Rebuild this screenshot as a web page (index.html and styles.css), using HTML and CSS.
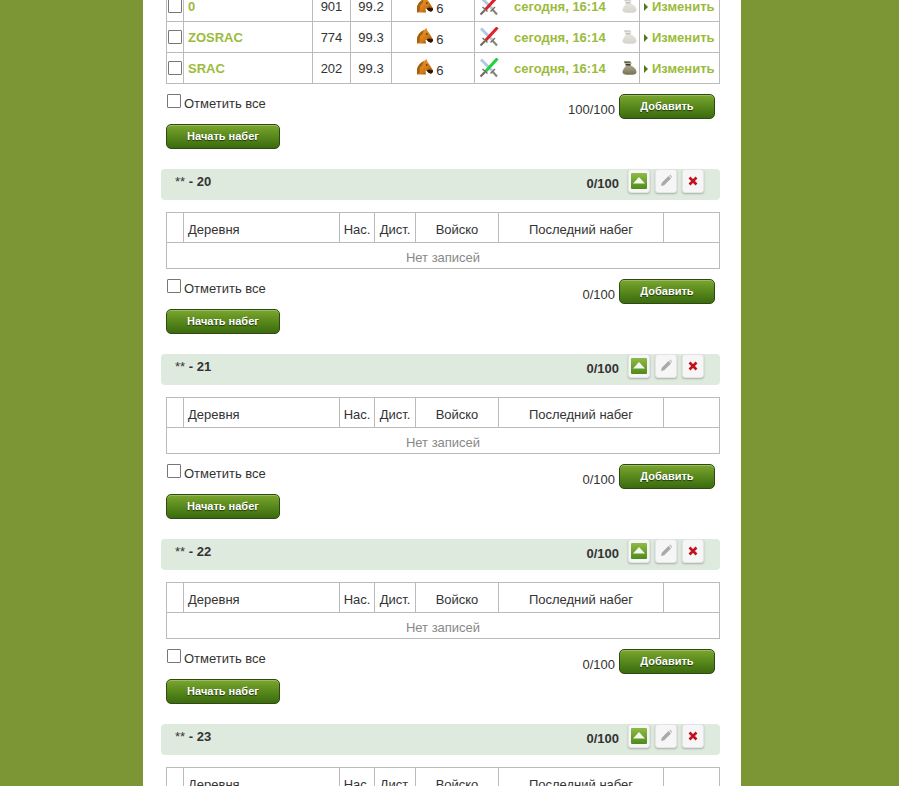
FILE: index.html
```html
<!DOCTYPE html>
<html lang="en">
<head>
    <meta charset="UTF-8">
    <meta name="viewport" content="width=device-width, initial-scale=1.0">
    <title>Набеги</title>
    <link rel="stylesheet" href="styles.css">
</head>
<body>
    <div class="content">

        <div class="group first">
            <table class="raids full">
                <colgroup><col class="c-check"><col class="c-name"><col class="c-pop"><col class="c-dist"><col class="c-troops"><col class="c-last"><col class="c-edit"></colgroup>
                <tr>
                    <td><input type="checkbox"></td>
                    <td class="name"><a href="#">0</a></td>
                    <td class="center">901</td>
                    <td class="center">99.2</td>
                    <td class="center troops"><svg class="horse"><use href="#i-horse"/></svg> 6</td>
                    <td><div class="last"><svg class="swords"><use href="#i-swords-red"/></svg><span class="date">сегодня, 16:14</span><svg class="bag faded"><use href="#i-bag"/></svg></div></td>
                    <td class="edit"><a href="#">Изменить</a></td>
                </tr>
                <tr>
                    <td><input type="checkbox"></td>
                    <td class="name"><a href="#">ZOSRAC</a></td>
                    <td class="center">774</td>
                    <td class="center">99.3</td>
                    <td class="center troops"><svg class="horse"><use href="#i-horse"/></svg> 6</td>
                    <td><div class="last"><svg class="swords"><use href="#i-swords-red"/></svg><span class="date">сегодня, 16:14</span><svg class="bag faded"><use href="#i-bag"/></svg></div></td>
                    <td class="edit"><a href="#">Изменить</a></td>
                </tr>
                <tr>
                    <td><input type="checkbox"></td>
                    <td class="name"><a href="#">SRAC</a></td>
                    <td class="center">202</td>
                    <td class="center">99.3</td>
                    <td class="center troops"><svg class="horse"><use href="#i-horse"/></svg> 6</td>
                    <td><div class="last"><svg class="swords"><use href="#i-swords-green"/></svg><span class="date">сегодня, 16:14</span><svg class="bag"><use href="#i-bag"/></svg></div></td>
                    <td class="edit"><a href="#">Изменить</a></td>
                </tr>
            </table>
            <div class="table-footer">
                <label class="check-all"><input type="checkbox"> Отметить все</label>
                <div class="add-box"><span class="count">100/100</span><button class="btn btn-add">Добавить</button></div>
            </div>
            <button class="btn btn-start">Начать набег</button>
        </div>

        <div class="group">
            <div class="group-bar">
                <span class="group-title"><span class="stars">**</span> - 20</span>
                <span class="group-count">0/100</span>
                <button class="tool"><svg><use href="#i-up"/></svg></button>
                <button class="tool"><svg><use href="#i-pencil"/></svg></button>
                <button class="tool"><svg><use href="#i-close"/></svg></button>
            </div>
            <table class="raids empty">
                <colgroup><col class="c-check"><col class="e-name"><col class="e-pop"><col class="c-dist"><col class="c-troops"><col class="c-last"><col class="e-edit"></colgroup>
                <tr><th></th><th class="left">Деревня</th><th>Нас.</th><th>Дист.</th><th>Войско</th><th>Последний набег</th><th></th></tr>
                <tr><td colspan="7" class="none">Нет записей</td></tr>
            </table>
            <div class="table-footer">
                <label class="check-all"><input type="checkbox"> Отметить все</label>
                <div class="add-box"><span class="count">0/100</span><button class="btn btn-add">Добавить</button></div>
            </div>
            <button class="btn btn-start">Начать набег</button>
        </div>

        <div class="group">
            <div class="group-bar">
                <span class="group-title"><span class="stars">**</span> - 21</span>
                <span class="group-count">0/100</span>
                <button class="tool"><svg><use href="#i-up"/></svg></button>
                <button class="tool"><svg><use href="#i-pencil"/></svg></button>
                <button class="tool"><svg><use href="#i-close"/></svg></button>
            </div>
            <table class="raids empty">
                <colgroup><col class="c-check"><col class="e-name"><col class="e-pop"><col class="c-dist"><col class="c-troops"><col class="c-last"><col class="e-edit"></colgroup>
                <tr><th></th><th class="left">Деревня</th><th>Нас.</th><th>Дист.</th><th>Войско</th><th>Последний набег</th><th></th></tr>
                <tr><td colspan="7" class="none">Нет записей</td></tr>
            </table>
            <div class="table-footer">
                <label class="check-all"><input type="checkbox"> Отметить все</label>
                <div class="add-box"><span class="count">0/100</span><button class="btn btn-add">Добавить</button></div>
            </div>
            <button class="btn btn-start">Начать набег</button>
        </div>

        <div class="group">
            <div class="group-bar">
                <span class="group-title"><span class="stars">**</span> - 22</span>
                <span class="group-count">0/100</span>
                <button class="tool"><svg><use href="#i-up"/></svg></button>
                <button class="tool"><svg><use href="#i-pencil"/></svg></button>
                <button class="tool"><svg><use href="#i-close"/></svg></button>
            </div>
            <table class="raids empty">
                <colgroup><col class="c-check"><col class="e-name"><col class="e-pop"><col class="c-dist"><col class="c-troops"><col class="c-last"><col class="e-edit"></colgroup>
                <tr><th></th><th class="left">Деревня</th><th>Нас.</th><th>Дист.</th><th>Войско</th><th>Последний набег</th><th></th></tr>
                <tr><td colspan="7" class="none">Нет записей</td></tr>
            </table>
            <div class="table-footer">
                <label class="check-all"><input type="checkbox"> Отметить все</label>
                <div class="add-box"><span class="count">0/100</span><button class="btn btn-add">Добавить</button></div>
            </div>
            <button class="btn btn-start">Начать набег</button>
        </div>

        <div class="group">
            <div class="group-bar">
                <span class="group-title"><span class="stars">**</span> - 23</span>
                <span class="group-count">0/100</span>
                <button class="tool"><svg><use href="#i-up"/></svg></button>
                <button class="tool"><svg><use href="#i-pencil"/></svg></button>
                <button class="tool"><svg><use href="#i-close"/></svg></button>
            </div>
            <table class="raids empty">
                <colgroup><col class="c-check"><col class="e-name"><col class="e-pop"><col class="c-dist"><col class="c-troops"><col class="c-last"><col class="e-edit"></colgroup>
                <tr><th></th><th class="left">Деревня</th><th>Нас.</th><th>Дист.</th><th>Войско</th><th>Последний набег</th><th></th></tr>
                <tr><td colspan="7" class="none">Нет записей</td></tr>
            </table>
        </div>

    </div>

    <!-- icons -->
    <svg class="icon-defs" xmlns="http://www.w3.org/2000/svg">
        <defs>
            <linearGradient id="horse-fill" x1="0" y1="0" x2="1" y2="1">
                <stop offset="0" stop-color="#f4a838"/>
                <stop offset="0.6" stop-color="#d07a18"/>
                <stop offset="1" stop-color="#7a3c08"/>
            </linearGradient>
            <linearGradient id="bag-fill" x1="0" y1="0" x2="0" y2="1">
                <stop offset="0" stop-color="#c4bea2"/>
                <stop offset="1" stop-color="#767056"/>
            </linearGradient>
            <linearGradient id="up-fill" x1="0" y1="0" x2="0" y2="1">
                <stop offset="0" stop-color="#8fbb45"/>
                <stop offset="1" stop-color="#4f8a1e"/>
            </linearGradient>
        </defs>
        <symbol id="i-horse" viewBox="0 0 16 16">
            <path d="M0 15.5 L0 10 C1 6 4 3.5 7 2 L9.5 0 L10.5 3 C12.5 5 14 8.5 15.8 11 L16 13 L14 14.8 L11.5 13.8 L9.5 11.5 L8.5 12 L9 15.5 Z" fill="url(#horse-fill)"/>
            <path d="M0 10 C1 6 4 3.5 7 2 L5.5 6 L3 8.5 L2.5 14 L0 15.5 Z" fill="#a85e10"/>
            <path d="M12 10.5 L16 11.5 L16 13 L14 14.8 L11.5 13.8 L9.5 11.5 Z" fill="#2c1603"/>
            <circle cx="9.8" cy="6" r="0.8" fill="#3a1c04"/>
        </symbol>
        <symbol id="i-swords-red" viewBox="0 0 20 20">
            <path d="M2 1.5 L13 12.5" stroke="#b4c8e4" stroke-width="3"/>
            <path d="M13 13 L18 18.5" stroke="#8a867c" stroke-width="2.2"/>
            <path d="M11.5 15.5 L16 11" stroke="#77736a" stroke-width="1.4"/>
            <path d="M18.5 0.5 L6.5 13.5" stroke="#e01f26" stroke-width="3"/>
            <path d="M6 14 L1.5 18.5" stroke="#6f6a60" stroke-width="2.2"/>
            <path d="M3.5 11 L8.5 15.5" stroke="#6f6a60" stroke-width="1.4"/>
        </symbol>
        <symbol id="i-swords-green" viewBox="0 0 20 20">
            <path d="M2 1.5 L13 12.5" stroke="#b4c8e4" stroke-width="3"/>
            <path d="M13 13 L18 18.5" stroke="#8a867c" stroke-width="2.2"/>
            <path d="M11.5 15.5 L16 11" stroke="#77736a" stroke-width="1.4"/>
            <path d="M18.5 0.5 L6.5 13.5" stroke="#1fd23c" stroke-width="3"/>
            <path d="M6 14 L1.5 18.5" stroke="#6f6a60" stroke-width="2.2"/>
            <path d="M3.5 11 L8.5 15.5" stroke="#6f6a60" stroke-width="1.4"/>
        </symbol>
        <symbol id="i-bag" viewBox="0 0 16 14">
            <path d="M3 0.5 L9 0.5 L11 2 L9 4 C13 5.5 15.5 8.5 15.5 11 C15.5 13 13.5 13.8 9 13.8 C3.5 13.8 1.5 13 1.5 11 C1.5 8.5 4 6 6 4 L3 2 Z" fill="url(#bag-fill)"/>
            <path d="M4.5 3.8 L9.5 3.8" stroke="#2f2b1c" stroke-width="1.4"/>
            <path d="M3 0.5 L9 0.5 L10 1.5 L4 1.8 Z" fill="#3b3625"/>
        </symbol>
        <symbol id="i-up" viewBox="0 0 16 16">
            <rect x="0" y="0" width="16" height="16" rx="1" fill="url(#up-fill)"/>
            <path d="M8 4 L14 10.5 L2 10.5 Z" fill="#f4f8ea"/>
        </symbol>
        <symbol id="i-pencil" viewBox="0 0 16 16">
            <path d="M3 13 L3.8 9.8 L10.5 3 L13 5.5 L6.2 12.2 Z" fill="#a9a9a9"/>
            <path d="M11.2 2.4 L12.2 1.6 L14.4 3.8 L13.6 4.8 Z" fill="#bdbdbd"/>
        </symbol>
        <symbol id="i-close" viewBox="0 0 16 16">
            <path d="M4.5 4.5 L11.5 11.5 M11.5 4.5 L4.5 11.5" stroke="#c4101c" stroke-width="2.6"/>
        </symbol>
    </svg>
</body>
</html>
```
FILE: styles.css
```css
html, body {
    height: 786px;
    overflow: hidden;
}
body {
    margin: 0;
    background-color: #7d9635;
    font-family: "Liberation Sans", Arial, sans-serif;
    font-size: 13px;
    color: #333;
}
.content {
    width: 559px;
    margin-left: 143px;
    padding: 0 21px 0 18px;
    background-color: #fff;
    min-height: 786px;
}
.group {
    margin-bottom: 20px;
}
.group.first {
    margin-top: -10px;
}

/* group header */
.group-bar {
    display: flex;
    align-items: flex-start;
    height: 31px;
    margin-bottom: 12px;
    padding-right: 16px;
    box-sizing: border-box;
    border-radius: 4px;
    background-color: #dfeadf;
}
.group-title {
    flex: 1;
    padding: 5px 0 0 14px;
    font-size: 13px;
    font-weight: bold;
    line-height: 15px;
}
.stars {
    font-weight: normal;
}
.group-count {
    margin: 7px 9px 0 0;
    font-size: 13px;
    font-weight: bold;
    line-height: 15px;
}
.tool {
    display: flex;
    align-items: center;
    justify-content: center;
    width: 22px;
    height: 24px;
    margin-left: 5px;
    padding: 0;
    border: 1px solid #e4e4e4;
    border-radius: 3px;
    background-color: #f6f6f6;
    box-shadow: 0 1px 2px rgba(0, 0, 0, 0.25);
}
.tool:first-of-type {
    margin-left: 0;
}
.tool svg {
    width: 16px;
    height: 16px;
}

/* tables */
.raids {
    width: 554px;
    margin-left: 5px;
    table-layout: fixed;
    border-collapse: collapse;
}
.raids th, .raids td {
    padding: 0;
    border: 1px solid #bbb;
    font-weight: normal;
}
.raids th {
    height: 30px;
    padding-top: 3px;
    box-sizing: border-box;
    text-align: center;
}
.raids th.left {
    padding-left: 4px;
    text-align: left;
}
.raids td {
    height: 31px;
    box-sizing: border-box;
}
.raids td.none {
    height: 26px;
    padding-top: 4px;
    color: #888;
    text-align: center;
}
.c-check { width: 17px; }
.c-name { width: 129px; }
.c-pop { width: 38px; }
.c-dist { width: 41px; }
.c-troops { width: 83px; }
.c-last { width: 165px; }
.c-edit { width: 80px; }
.e-name { width: 156px; }
.e-pop { width: 35px; }
.e-edit { width: 56px; }

.center {
    text-align: center;
}
.raids td.troops {
    padding-right: 6px;
}
.raids td.name {
    padding-left: 4px;
}
.name a, .edit a, .date {
    color: #9bbb3c;
    font-weight: bold;
    text-decoration: none;
}
.horse {
    width: 16px;
    height: 16px;
}
.last {
    display: flex;
    align-items: center;
    padding-left: 4px;
}
.swords {
    width: 20px;
    height: 20px;
}
.date {
    flex: 1;
    margin-left: 15px;
}
.bag {
    width: 16px;
    height: 14px;
    margin-right: 2px;
}
.bag.faded {
    opacity: 0.3;
}
.edit {
    white-space: nowrap;
}
.edit a::before {
    content: "";
    display: inline-block;
    margin: 0 4px 0 4px;
    border-left: 4px solid #4c7a1c;
    border-top: 4px solid transparent;
    border-bottom: 4px solid transparent;
}

/* below the table */
input[type="checkbox"] {
    appearance: none;
    display: block;
    width: 14px;
    height: 14px;
    margin: 0 0 0 1px;
    border: 1px solid #777;
    border-radius: 1px;
    background-color: #fff;
}
.table-footer {
    display: flex;
    justify-content: space-between;
    margin: 10px 5px 5px 5px;
    height: 25px;
}
.check-all {
    display: flex;
    gap: 3px;
    line-height: 19px;
    height: 19px;
}
.add-box {
    display: flex;
    align-items: flex-start;
}
.count {
    margin: 8px 4px 0 0;
    line-height: 16px;
}
.btn {
    display: block;
    height: 25px;
    padding: 0 0 2px;
    border: 1px solid #2f4a10;
    border-radius: 5px;
    background: linear-gradient(#7ba62f, #55861a 55%, #3c6a10);
    box-shadow: inset 0 1px 0 rgba(255, 255, 255, 0.25);
    color: #fff;
    font-family: "Liberation Sans", Arial, sans-serif;
    font-size: 11px;
    font-weight: bold;
    text-shadow: 0 1px 1px rgba(0, 0, 0, 0.6);
}
.btn-add {
    width: 96px;
}
.btn-start {
    width: 114px;
    margin-left: 5px;
}
.icon-defs {
    display: block;
    width: 0;
    height: 0;
}
```
